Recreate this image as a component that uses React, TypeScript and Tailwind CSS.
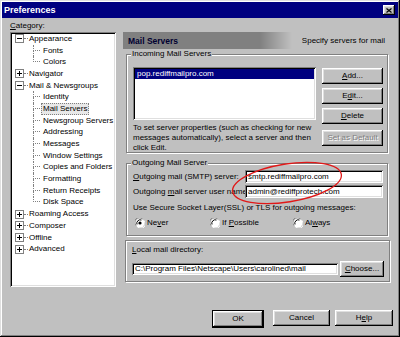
import React from "react";

const raised =
  "shadow-[inset_-1px_-1px_0_#000,inset_1px_1px_0_#fff,inset_-2px_-2px_0_#808080,inset_2px_2px_0_#dfdfdf]";
const sunken =
  "shadow-[inset_1px_1px_0_#808080,inset_-1px_-1px_0_#fff,inset_2px_2px_0_#000,inset_-2px_-2px_0_#dfdfdf]";
const etched = "border border-[#808080] shadow-[inset_1px_1px_0_#fff,1px_1px_0_#fff]";

type Node = { t: string; lvl: 0 | 1; box?: "+" | "-"; last?: boolean; sel?: boolean };

const tree: Node[] = [
  { t: "Appearance", lvl: 0, box: "-" },
  { t: "Fonts", lvl: 1 },
  { t: "Colors", lvl: 1, last: true },
  { t: "Navigator", lvl: 0, box: "+" },
  { t: "Mail & Newsgroups", lvl: 0, box: "-" },
  { t: "Identity", lvl: 1 },
  { t: "Mail Servers", lvl: 1, sel: true },
  { t: "Newsgroup Servers", lvl: 1 },
  { t: "Addressing", lvl: 1 },
  { t: "Messages", lvl: 1 },
  { t: "Window Settings", lvl: 1 },
  { t: "Copies and Folders", lvl: 1 },
  { t: "Formatting", lvl: 1 },
  { t: "Return Receipts", lvl: 1 },
  { t: "Disk Space", lvl: 1, last: true },
  { t: "Roaming Access", lvl: 0, box: "+" },
  { t: "Composer", lvl: 0, box: "+" },
  { t: "Offline", lvl: 0, box: "+" },
  { t: "Advanced", lvl: 0, box: "+" },
];

function ExpandBox({ kind }: { kind: "+" | "-" }) {
  return (
    <svg width="9" height="9" viewBox="0 0 9 9" className="shrink-0">
      <rect x="0.5" y="0.5" width="8" height="8" fill="#fff" stroke="#808080" />
      <path d="M2 4.5h5" stroke="#000" />
      {kind === "+" && <path d="M4.5 2v5" stroke="#000" />}
    </svg>
  );
}

function TreeRow({ n }: { n: Node }) {
  if (n.lvl === 0) {
    return (
      <div className="flex h-[11.7px] items-center">
        <div className="w-[3px]" />
        <ExpandBox kind={n.box ?? "+"} />
        <div className="w-[4px] border-t border-dotted border-[#808080]" />
        <span className="ml-[1px] whitespace-nowrap">{n.t}</span>
      </div>
    );
  }
  return (
    <div className="flex h-[11.7px] items-stretch">
      <div className="w-[21px]" />
      <div className="flex w-[7px] flex-col">
        <div className="h-1/2 border-l border-b border-dotted border-[#808080]" />
        <div className={`h-1/2 ${n.last ? "" : "border-l border-dotted border-[#808080]"}`} />
      </div>
      <span
        className={`ml-[1px] flex items-center whitespace-nowrap px-[1px] ${
          n.sel ? "border border-dotted border-[#808080] bg-[#e8e8e8]" : "border border-transparent"
        }`}
      >
        {n.t}
      </span>
    </div>
  );
}

function Btn({
  children,
  className = "",
  disabled,
}: {
  children: React.ReactNode;
  className?: string;
  disabled?: boolean;
}) {
  return (
    <div
      className={`flex h-[16px] items-center justify-center bg-[#c0c0c0] ${raised} ${
        disabled ? "text-[#808080] [text-shadow:1px_1px_0_#fff]" : ""
      } ${className}`}
    >
      {children}
    </div>
  );
}

function Radio({ on }: { on?: boolean }) {
  return (
    <svg width="10" height="10" viewBox="0 0 10 10" className="shrink-0">
      <circle cx="5" cy="5" r="4.5" fill="#fff" />
      <path d="M1 7.5A4.5 4.5 0 0 1 7.5 1" stroke="#808080" fill="none" />
      <path d="M2 6.5A3.5 3.5 0 0 1 6.5 2" stroke="#000" fill="none" />
      <path d="M9 2.5A4.5 4.5 0 0 1 2.5 9" stroke="#fff" fill="none" />
      {on && <circle cx="5" cy="5" r="1.6" fill="#000" />}
    </svg>
  );
}

function Field({ children, className = "" }: { children: React.ReactNode; className?: string }) {
  return (
    <div className={`flex items-center bg-white pl-[3px] whitespace-nowrap ${sunken} ${className}`}>
      {children}
    </div>
  );
}

export default function App() {
  return (
    <div
      className={`relative flex h-[337px] w-[400px] flex-col bg-[#c0c0c0] font-['Liberation_Sans',Arial,sans-serif] text-[8px] leading-[10px] text-black shadow-[inset_-1px_-1px_0_#000,inset_1px_1px_0_#dfdfdf,inset_-2px_-2px_0_#808080,inset_2px_2px_0_#fff]`}
    >
      {/* Title bar */}
      <div className="mx-[2px] mt-[2px] flex h-[16px] items-center justify-between bg-[#000080] pl-[2px] pr-[3px]">
        <span className="text-[9px] font-bold text-white">Preferences</span>
        <div className={`flex h-[10px] w-[12px] items-center justify-center bg-[#c0c0c0] ${raised}`}>
          <svg width="6" height="5" viewBox="0 0 6 5">
            <path d="M0.5 0.5L5.5 4.5M5.5 0.5L0.5 4.5" stroke="#000" strokeWidth="1.2" />
          </svg>
        </div>
      </div>

      <div className="flex">
        {/* Left: category tree */}
        <div className="ml-[10px] flex w-[106px] flex-col">
          <div className="flex h-[14px] items-center pt-[1px]">
            <span>
              <u>C</u>ategory:
            </span>
          </div>
          <div className={`h-[255px] bg-white pt-[1px] pl-[2px] ${sunken}`}>
            {tree.map((n) => (
              <TreeRow key={n.t} n={n} />
            ))}
          </div>
        </div>

        {/* Right: panel */}
        <div className="ml-[7px] mt-[14px] flex w-[267px] flex-col">
          <div className="flex h-[17px] items-center justify-between bg-[linear-gradient(to_right,#808080_0,#808080_137px,#c0c0c0_169px)] pl-[5px] pr-[5px]">
            <span className="text-[8.5px] font-bold text-[#000030]">Mail Servers</span>
            <span>Specify servers for mail</span>
          </div>

          {/* Incoming */}
          <div className={`relative mt-[5px] ml-[3px] mr-[2px] h-[99px] ${etched}`}>
            <span className="absolute -top-[6px] left-[4px] bg-[#c0c0c0] px-[1px]">
              Incoming Mail Servers
            </span>
            <div className="flex pl-[6px] pt-[12px]">
              <div className="flex w-[183px] flex-col">
                <div className={`h-[53px] bg-white p-[2px] ${sunken}`}>
                  <div className="flex h-[10px] items-center bg-[#000080] pl-[2px] text-white">
                    pop.rediffmailpro.com
                  </div>
                </div>
                <div className="mt-[3px] whitespace-nowrap">
                  To set server properties (such as checking for new
                  <br />
                  messages automatically), select a server and then
                  <br />
                  click Edit.
                </div>
              </div>
              <div className="ml-[6px] mt-[1px] flex w-[61px] flex-col">
                <Btn>
                  <span>
                    <u>A</u>dd...
                  </span>
                </Btn>
                <Btn className="mt-[4px]">
                  <span>
                    E<u>d</u>it...
                  </span>
                </Btn>
                <Btn className="mt-[4px]">
                  <span>
                    <u>D</u>elete
                  </span>
                </Btn>
                <Btn className="mt-[6px]" disabled>
                  Set as Default
                </Btn>
              </div>
            </div>
          </div>

          {/* Outgoing */}
          <div className={`relative mt-[10px] ml-[3px] mr-[2px] h-[73px] ${etched}`}>
            <span className="absolute -top-[6px] left-[4px] bg-[#c0c0c0] px-[1px]">
              Outgoing Mail Server
            </span>
            <div className="flex flex-col pl-[6px] pr-[4px] pt-[6px]">
              <div className="flex h-[13px] items-center">
                <span className="w-[112px] whitespace-nowrap">
                  <u>O</u>utgoing mail (SMTP) server:
                </span>
                <Field className="h-[13px] flex-1">smtp.rediffmailpro.com</Field>
              </div>
              <div className="mt-[2px] flex h-[13px] items-center">
                <span className="w-[112px] whitespace-nowrap">
                  Outgoing <u>m</u>ail server user name:
                </span>
                <Field className="h-[13px] flex-1">admin@rediffprotech.com</Field>
              </div>
              <div className="mt-[5px] whitespace-nowrap">
                Use Secure Socket Layer(SSL) or TLS for outgoing messages:
              </div>
              <div className="mt-[5px] flex h-[10px] items-center">
                <div className="ml-[2px] flex w-[75px] items-center gap-[2px]">
                  <Radio on />
                  <span>
                    Ne<u>v</u>er
                  </span>
                </div>
                <div className="flex w-[83px] items-center gap-[2px]">
                  <Radio />
                  <span>
                    If <u>P</u>ossible
                  </span>
                </div>
                <div className="flex items-center gap-[2px]">
                  <Radio />
                  <span>
                    Al<u>w</u>ays
                  </span>
                </div>
              </div>
            </div>
          </div>

          {/* Local mail directory */}
          <div className={`mt-[4px] ml-[2px] h-[42px] ${etched}`}>
            <div className="flex flex-col pl-[6px] pt-[4px]">
              <span>
                <u>L</u>ocal mail directory:
              </span>
              <div className="mt-[6px] flex h-[16px] items-center">
                <Field className="h-[12px] w-[206px] pl-[2px]">
                  {"C:\\Program Files\\Netscape\\Users\\carolined\\mail"}
                </Field>
                <Btn className="ml-[2px] w-[44px]">
                  <span>
                    <u>C</u>hoose...
                  </span>
                </Btn>
              </div>
            </div>
          </div>
        </div>
      </div>

      {/* Dialog buttons */}
      <div className="mt-[23px] flex pl-[212px]">
        <div className="w-[52px] border border-black">
          <Btn className="h-[14px]">OK</Btn>
        </div>
        <Btn className="ml-[9px] w-[57px]">Cancel</Btn>
        <Btn className="ml-[5px] w-[58px]">
          <span>
            H<u>e</u>lp
          </span>
        </Btn>
      </div>

      {/* Red annotation circle */}
      <svg
        className="pointer-events-none absolute left-0 top-0"
        width="400"
        height="337"
        viewBox="0 0 400 337"
      >
        <ellipse
          cx="287"
          cy="183"
          rx="55"
          ry="19"
          transform="rotate(-9 287 183)"
          fill="none"
          stroke="#e01818"
          strokeWidth="1.3"
        />
      </svg>
    </div>
  );
}
